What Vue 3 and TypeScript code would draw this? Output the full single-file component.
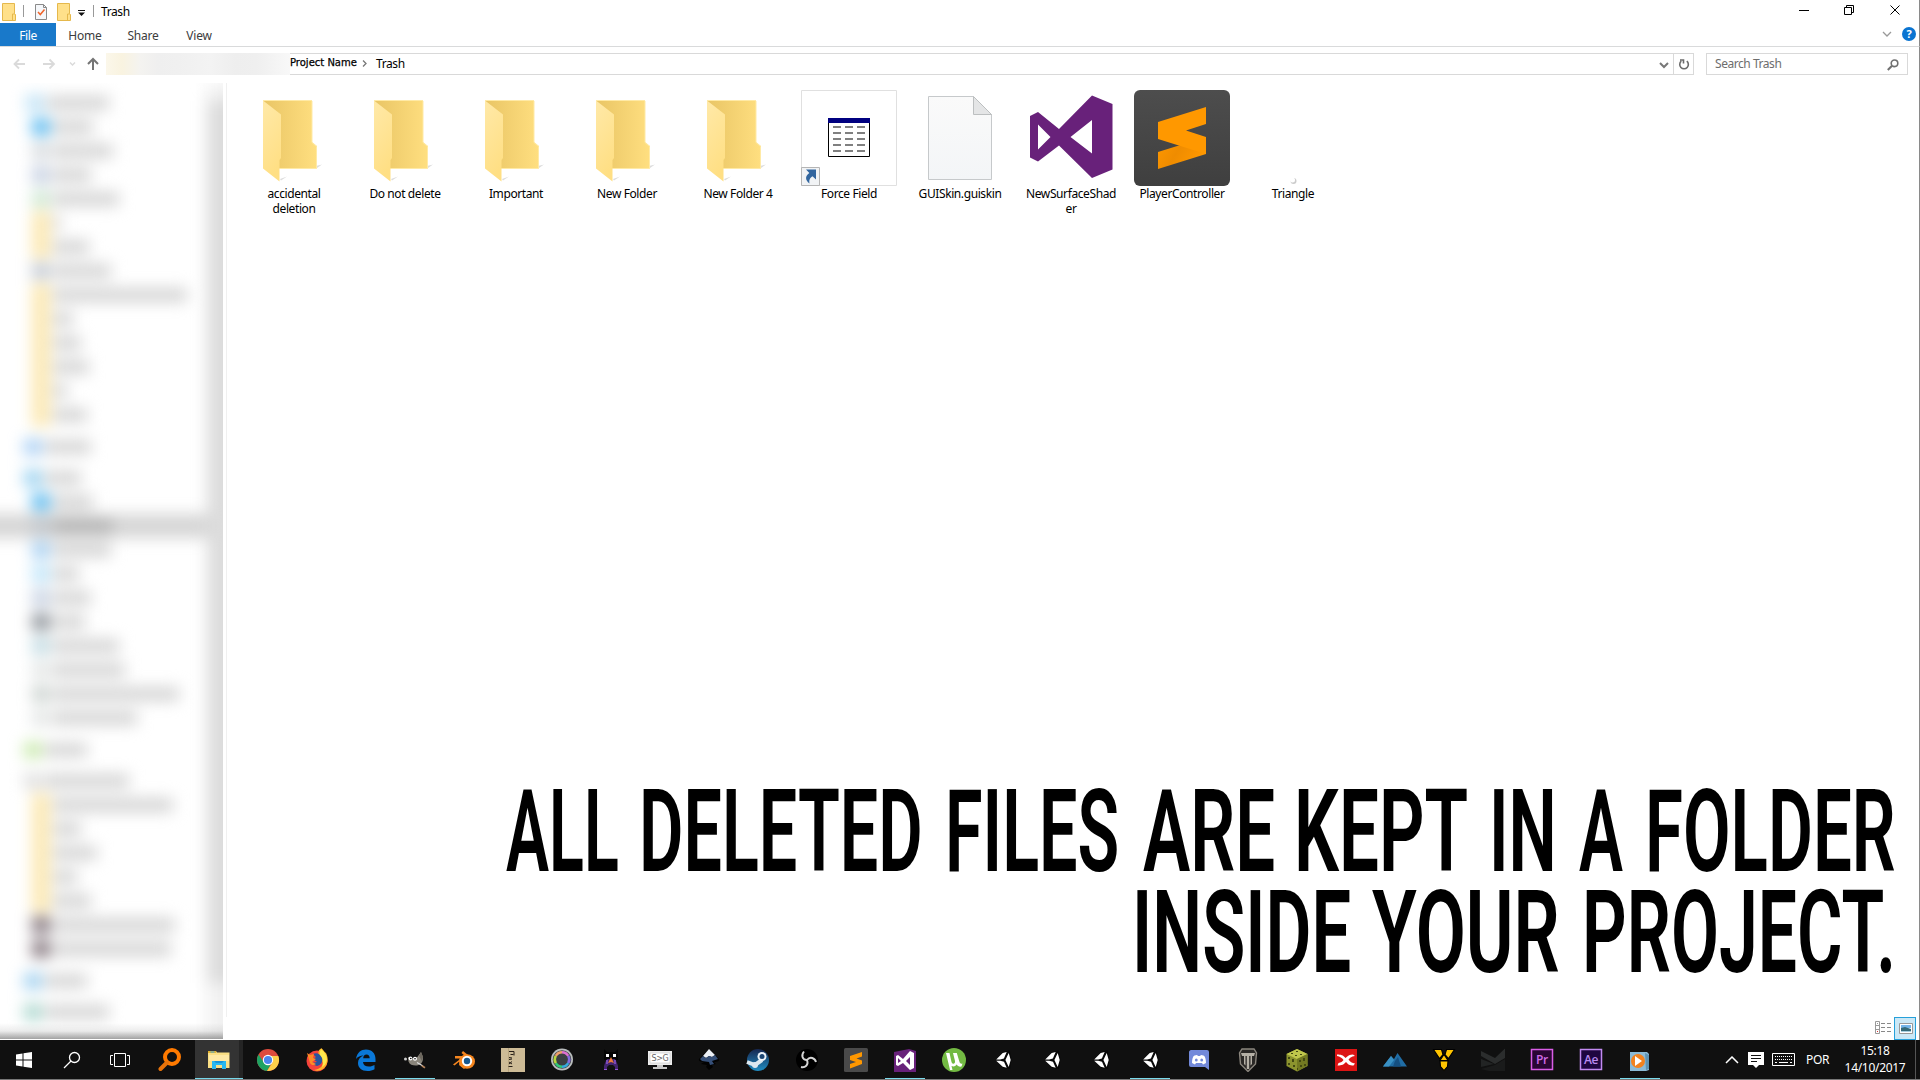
<script setup lang="ts">
import { onMounted, ref } from 'vue'

interface FileItem { name: string; kind: string }
interface NavRow { x: number; color: string; w: number; gap?: number; selected?: boolean }
interface TaskItem { art: string; state?: string }
interface Word { text: string; w: number; gap: number; scale: number }

const tabs: string[] = ['Home', 'Share', 'View']

const files: FileItem[] = [
  { name: 'accidental deletion', kind: 'folder' },
  { name: 'Do not delete', kind: 'folder' },
  { name: 'Important', kind: 'folder' },
  { name: 'New Folder', kind: 'folder' },
  { name: 'New Folder 4', kind: 'folder' },
  { name: 'Force Field', kind: 'shortcut' },
  { name: 'GUISkin.guiskin', kind: 'blank' },
  { name: 'NewSurfaceShader', kind: 'vs' },
  { name: 'PlayerController', kind: 'sublime' },
  { name: 'Triangle', kind: 'dot' },
]

const yellow = '#fce9b4'
const nav: NavRow[] = [
  { x: 26, color: '#bfe2f6', w: 62 },
  { x: 32, color: '#55b8f0', w: 40 },
  { x: 32, color: '#d6dade', w: 60 },
  { x: 32, color: '#c4cfe2', w: 38 },
  { x: 32, color: '#cde8d1', w: 66 },
  { x: 32, color: yellow, w: 8 },
  { x: 32, color: yellow, w: 36 },
  { x: 32, color: '#c2cad8', w: 58 },
  { x: 32, color: yellow, w: 134 },
  { x: 32, color: yellow, w: 20 },
  { x: 32, color: yellow, w: 28 },
  { x: 32, color: yellow, w: 36 },
  { x: 32, color: yellow, w: 14 },
  { x: 32, color: yellow, w: 34 },
  { x: 24, color: '#a9d0f6', w: 46, gap: 8 },
  { x: 24, color: '#97d1f1', w: 36, gap: 7 },
  { x: 32, color: '#55b8f0', w: 40 },
  { x: 32, color: '#bfc5cb', w: 60, selected: true },
  { x: 32, color: '#a4cff3', w: 58 },
  { x: 32, color: '#bce4fa', w: 26 },
  { x: 32, color: '#c5d0e2', w: 38 },
  { x: 32, color: '#868d94', w: 32 },
  { x: 32, color: '#bfdae2', w: 66 },
  { x: 32, color: '#e3e6e5', w: 72 },
  { x: 32, color: '#cbd2cf', w: 126 },
  { x: 32, color: '#e3e6e5', w: 84 },
  { x: 24, color: '#c9eaac', w: 42, gap: 8 },
  { x: 24, color: '#dfdfdf', w: 84, gap: 7 },
  { x: 32, color: yellow, w: 120 },
  { x: 32, color: yellow, w: 28 },
  { x: 32, color: yellow, w: 44 },
  { x: 32, color: yellow, w: 24 },
  { x: 32, color: yellow, w: 38 },
  { x: 32, color: '#7d6e76', w: 122 },
  { x: 32, color: '#7d6e76', w: 118 },
  { x: 24, color: '#9fd0f0', w: 42, gap: 8 },
  { x: 24, color: '#a8d6cd', w: 64, gap: 7 },
]

// Each word has its own width; the glyphs are condensed to fill it once the font is measured.
const word = (text: string, w: number, gap = 0): Word => ({ text, w, gap, scale: 0.62 })
const lines = ref<Word[][]>([
  [
    word('ALL', 113), word('DELETED', 284, 20), word('FILES', 174, 22), word('ARE', 132, 24),
    word('KEPT', 174, 19), word('IN', 68, 21), word('A', 44, 22), word('FOLDER', 251, 22),
  ],
  [word('INSIDE', 219), word('YOUR', 188, 21), word('PROJECT.', 314, 22)],
])
const headline = ref<HTMLElement | null>(null)

onMounted(() => {
  const glyphs = headline.value?.querySelectorAll<HTMLElement>('.glyphs')
  if (!glyphs) return
  lines.value.flat().forEach((w, i) => {
    w.scale = w.w / glyphs[i].offsetWidth
  })
})

const unity =
  '<g transform="translate(2.200 0)"><path d="M3 12L10 4l6.500-2 1.700 9.500L17 21l-7-1z" fill="#000" opacity=".5"/><path d="M3 11.500L9.500 5l4-1-2.800 6.500L7 11.500zM3 12.700h4l3.800 1 2.700 6-4-1zM12.200 11.900L15.500 5l2 7-2 7z" fill="#fff"/></g>'

const tasks: TaskItem[] = [
  { art: '<circle cx="14" cy="9" r="7" fill="none" stroke="#ff7a00" stroke-width="4"/><path d="M9 14.500L2.500 21" stroke="#e8730a" stroke-width="4" stroke-linecap="round"/>' },
  { state: 'active', art: '<path d="M1 3h8l1 1.500h12.500V20H1z" fill="#fadf84"/><path d="M1 3h8v2H1z" fill="#e6b32e"/><path d="M3.500 3.500h4v1h-4z" fill="#3ba9e8"/><path d="M2 7h20v6H2z" fill="#ffe9a4"/><path d="M5 21v-8h14v8h-4v-4H9v4z" fill="#28b8f0"/><path d="M7 13h10l-2 2H9z" fill="#1592d8"/>' },
  { art: '<circle cx="12" cy="12" r="11" fill="#dd4b3e"/><path d="M2.500 6.500A11 11 0 0 0 11 23l5-9-8 .5z" fill="#1da362"/><path d="M22.300 8H12.500l4 6.500L11 23A11 11 0 0 0 22.300 8z" fill="#fcd04b"/><circle cx="12" cy="12" r="5.200" fill="#fff"/><circle cx="12" cy="12" r="4.100" fill="#4a86ee"/>' },
  { art: '<circle cx="12" cy="13" r="10.500" fill="#f5433b"/><path d="M14 2c2-1 2-2 2-2 3 2 3 4 5 5 3 6 2 12-3 16-3 2-7 2-9 1 7-1 10-5 8-9-1-4-5-5-3-11z" fill="#ffb426"/><path d="M16 1c4 3 6 7 6 11-1 4-3 6-5 7 2-4 1-8-1-10-2-3-1-6 0-8z" fill="#ffe94d"/><path d="M8 6c4-2 7 0 9 4 1 4-1 7-5 8-3-1-5-2-5-3l5-1-4-3 3-2z" fill="#28559e"/><path d="M2 5l3 2 4-1-1 4 3 1-4 3 4 2c-2 2-5 1-6-1z" fill="#ff8c25"/>' },
  { art: '<path d="M2 11C3 4.500 7 1.500 12 1.500c6 0 9.500 4 9.500 9.500v3H9c.2 3 2.500 4.500 6 4.500 2.200 0 4-.6 5.500-1.500v4.200c-2 1.200-4.200 1.800-7 1.800C7.500 23 4 19.500 4 15c0-3.500 2-6.200 5.500-7.500C6.500 7.500 3.500 9 2 11zM9.200 10.300h6.500C15.700 8 14.500 6.500 12.500 6.500S9.300 8 9.200 10.300z" fill="#0a78d8"/>' },
  { state: 'open', art: '<path d="M5 9l4 1.500 5-1 4-5.500 2 5c.5 6-3 8.500-7.500 8.500-3 0-6-1-7-4z" fill="#8a857b"/><path d="M18 4l2 5-1 4-3-5z" fill="#6c675e"/><circle cx="7.500" cy="10.500" r="1.900" fill="#fff"/><circle cx="12" cy="10.800" r="2" fill="#fff"/><circle cx="7.800" cy="10.500" r=".8"/><circle cx="12" cy="10.800" r=".8"/><circle cx="2.500" cy="11" r="1.500" fill="#ccc"/><path d="M14 14.500l6 3.500" stroke="#ddd" stroke-width="1.300"/><path d="M19 17l3.500 2-1 1.500-3-2z" fill="#b5845c"/>' },
  { art: '<path d="M1 16.500l8-6H3V8h10l-3.500-3L11 3l10 8-9 10-5-4 1-4-5.500 4.500z" fill="#f5861f"/><ellipse cx="15" cy="13.500" rx="8" ry="7.300" fill="#f5861f"/><circle cx="15" cy="13" r="5.200" fill="#fff"/><circle cx="15" cy="13" r="3.200" fill="#15588f"/>' },
  { art: '<path d="M0 0h24v24H0z" fill="#cdbb96"/><path d="M7 0h1v24H7z" fill="#b7a47e"/><path d="M8 3.500h5v4M9.500 6.500h3M8 9.500l3 .5M8 11.500l3-.5M8 14l3 2M11 13.500L8 16M7.500 18.500h4" stroke="#282018" fill="none"/>' },
  { art: '<circle cx="12" cy="11.500" r="11" fill="#b9bdbe"/><circle cx="12" cy="11.500" r="9.300" fill="#3f4446"/><g fill="none" stroke-width="2.600"><path d="M12 4.300a7.200 7.200 0 0 1 6.200 3.600" stroke="#df70cf"/><path d="M18.200 7.900a7.200 7.200 0 0 1 0 7.200" stroke="#856ae0"/><path d="M18.200 15.100a7.200 7.200 0 0 1-6.200 3.600" stroke="#35a9dd"/><path d="M12 18.700a7.200 7.200 0 0 1-6.200-3.600" stroke="#30c978"/><path d="M5.800 15.100a7.200 7.200 0 0 1 0-7.200" stroke="#b7d83d"/><path d="M5.800 7.900A7.200 7.200 0 0 1 12 4.300" stroke="#ef9f69"/></g><circle cx="12" cy="11.500" r="5.600" fill="#3c4043"/>' },
  { art: '<path d="M5 1l3 3h8l3-3v11H5z" fill="#050505"/><path d="M7 6h3v3H7zM14 6h3v3h-3z" fill="#fff"/><path d="M8 11h8l2 4 1 3v4h-3v-3l-2-2h-4l-2 2v3H5v-4l1-3z" fill="#43246e"/><path d="M12 9l3 6-3-1-3 1z" fill="#eb7b38"/><path d="M8 12v4M16 12v4" stroke="#8a55d0" stroke-width="1.500"/><path d="M5 21.500h3M16 21.500h3" stroke="#9552dc"/>' },
  { art: '<path d="M0 3h24v14H0z" fill="#eee"/><path d="M2 5h20v10H2z" fill="#fff" stroke="#bbb" stroke-width=".5"/><path d="M9 17h6v2h4v2H5v-2h4z" fill="#c8c8c8"/><text x="12" y="13" text-anchor="middle" font-size="8" font-family="DejaVu Sans" fill="#666">S&gt;G</text>' },
  { art: '<path d="M12 1l10 10c1 2-2 3-5 3l2 2-4 1 1 2-4 3-3-3 1-2-6-1 3-2c-3 0-6-1-5-3z" fill="#020202"/><path d="M12 1l6 6-3 2-3-1-3 2-3-2z" fill="#ecf0f6"/><path d="M6 8l3 2 3-2 3 1 3-2 3 4-6 2 2 3-4 1-1-3-7-1-2-2z" fill="#354f78"/>' },
  { art: '<defs><linearGradient id="steam" x2="0" y2="1"><stop stop-color="#162650"/><stop offset="1" stop-color="#208dc2"/></linearGradient></defs><circle cx="12" cy="12" r="11" fill="url(#steam)"/><path d="M1 14l8 3 7-5" stroke="#dce8f0" stroke-width="4" fill="none"/><circle cx="16" cy="8.500" r="4.500" fill="#eef4fa"/><circle cx="16" cy="8.500" r="2.500" fill="#1d4673"/><circle cx="9" cy="17" r="3" fill="#dce8f0"/>' },
  { art: '<circle cx="12" cy="12" r="11" fill="#000"/><g fill="none" stroke="#d5d5d5" stroke-width="1.900"><path d="M12 12C7 12 6 7 9 3.500"/><path d="M12 12c3-4 8-2 9 2"/><path d="M12 12c2 5-2 8-6 7"/></g>' },
  { art: '<rect width="24" height="24" rx="1.500" fill="#4a4a4a"/><path d="M6 8l12-4v4.500L12.500 10.500 18 12.500V16L6 20.500V16l6-2-6-2z" fill="#ff9800"/>' },
  { state: 'open', art: '<path d="M1 4l15-3 7 2v21H1z" fill="#68217a"/><path d="M17 3l4 2v15l-4 2-7-7-5 3-2-1V8l2-1 5 4zm0 6l-4 4 4 4zM5 10v5l3-2z" fill="#fff" fill-rule="evenodd"/>' },
  { art: '<circle cx="12" cy="12" r="12" fill="#73ba43"/><path d="M4 5h3.500l2 9c1 3 4 2 3.500-1l-2-8h3.800l2.700 9c.5 1.500 1.500 2 3 1.500l-1 3c-2 .5-4-.5-5-2-1 2-3 2.500-5 1.500l1 4H8z" fill="#fff"/>' },
  { art: unity }, { art: unity }, { art: unity }, { art: unity, state: 'open' },
  { art: '<path d="M4 2h16a2 2 0 0 1 2 2v18l-4-3H4a2 2 0 0 1-2-2V4c0-1 1-2 2-2z" fill="#7289da"/><path d="M5 15c0-4 1-7 2.500-7.500L10 7l1 1h2l1-1 2.500.5C18 8 19 11 19 15l-3 1.500-1-1.500H9l-1 1.500z" fill="#fff"/><ellipse cx="9.300" cy="12" rx="1.400" ry="1.600" fill="#7289da"/><ellipse cx="14.700" cy="12" rx="1.400" ry="1.600" fill="#7289da"/>' },
  { art: '<path d="M6 1h12l2.500 4-1 11-7.500 7.500L4.500 16l-1-11z" fill="#2a2826" stroke="#8b867e" stroke-width="1.400"/><path d="M5 5h14l-1 3h-2v8l-1.500 1.500V8h-1.300v13h-2.400V8H9.500v9.500L8 16V8H6z" fill="#b5b0a6"/>' },
  { art: '<path d="M12 1l10.500 5v12L12 23.500 1.500 18V6z" fill="#8c942e"/><path d="M12 1l10.500 5L12 11 1.500 6z" fill="#bfc64b"/><path d="M12 11l10.500-5v12L12 23.500z" fill="#737a22"/><g fill="#444a12"><path d="M6 5h2v1H6zM11 3h2v1h-2zM15 6h2v1h-2zM10 7h2v1h-2zM3 9h2v2H3zM7 11h2v3H7zM3 15h2v2H3zM8 17h2v2H8zM14 12h2v2h-2zM18 10h2v3h-2zM15 17h2v2h-2zM19 16h2v2h-2zM12 20h1v2h-1z"/></g>' },
  { art: '<path d="M1 1h22v22H1z" fill="#dc1414"/><path d="M3 6.500c4 0 6 .5 8.500 3.500C14 7.500 16 6.500 19 6.500l2 1.500c-4 .5-5 2-6.500 3.500 1.500 2.500 3.500 3.500 6.500 4l-1.500 2c-4 0-5.500-1-7.500-3.500-2 2.500-4 3.500-8.500 3.500l1-2.500c2.500-.5 4-1.500 5-3C8 10 6 8.500 3 8z" fill="#fff"/>' },
  { art: '<path d="M0 18.500L8 8l3 3 3.500-6L24 18.500z" fill="#206da5"/><path d="M0 18.500L8 8l3 4-5 6.500z" fill="#3a91c4"/><path d="M12 13l3-4 3 9.500h-8z" fill="#154f80"/>' },
  { art: '<g fill="#ffc400" stroke="#000" stroke-width="1.100"><path d="M1.500 1.500h8l1.500 5-3.500 4z"/><path d="M22.500 1.500h-8l-1.500 5 3.500 4z"/><path d="M8 13h8l-.5 5.500-3.500 4-3.500-4z"/><path d="M12 6.500l4 6H8z"/></g>' },
  { art: '<path d="M0 3l14 7L24 .5V10L14 16 0 8z" fill="#2b2d2d"/><path d="M0 11l13 5L0 19z" fill="#222424"/><path d="M0 21l14-4 10-6v12H8z" fill="#1a1b1b"/>' },
  { art: '<rect x="1.500" y="1.500" width="21" height="20" fill="#2a0634" stroke="#d95de6" stroke-width="1.500"/><text x="12" y="16" text-anchor="middle" font-size="12" font-family="Open Sans" font-weight="600" fill="#d06be8">Pr</text>' },
  { art: '<rect x="1.500" y="1.500" width="21" height="20" fill="#1e0640" stroke="#c18af0" stroke-width="1.500"/><text x="12" y="16" text-anchor="middle" font-size="12" font-family="Open Sans" font-weight="600" fill="#b98af0">Ae</text>' },
  { state: 'open', art: '<path d="M2 4h17l2 2v16l-3 1H2z" fill="#8bbad6"/><path d="M17 5l4 2v14l-3 1z" fill="#5e93b3"/><circle cx="10" cy="13" r="7" fill="#f2821e"/><path d="M7 8l7 5-7 5z" fill="#fff"/>' },
]
</script>

<template>
  <div class="desktop">
    <header class="titlebar">
      <svg class="mini" viewBox="0 0 14 18"><path d="M.5.500h12v10l1 1v6H.5z" fill="#ffe08a" stroke="#e5b84c" /><path d="M10.500 17v-6h2.500" fill="none" stroke="#e5b84c" /></svg>
      <i class="sep s1"></i>
      <svg class="doc" viewBox="0 0 12 16"><path d="M.5.500h8l3 3v12H.5z" fill="#f5f7fa" stroke="#8a8a8a" /><path d="M8.500.500v3h3" fill="none" stroke="#8a8a8a" /><path d="M3 8l2.300 2.500L9.500 5.500" fill="none" stroke="#f0642a" stroke-width="1.500" /></svg>
      <svg class="mini m2" viewBox="0 0 14 18"><path d="M.5.500h12v10l1 1v6H.5z" fill="#ffe08a" stroke="#e5b84c" /><path d="M10.500 17v-6h2.500" fill="none" stroke="#e5b84c" /></svg>
      <svg class="qat" viewBox="0 0 7 6"><path d="M0 0h7v1H0zM0 2.500h7L3.500 6z" fill="#111" /></svg>
      <i class="sep s2"></i>
      <span class="caption">Trash</span>
      <svg class="winctl" viewBox="0 0 102 12" fill="none" stroke="#000">
        <path d="M0 6.500h10M45.500 3.500h7v7h-7zM47.500 3.500v-2h7v7h-2M91.500 1.500l9 9M100.500 1.500l-9 9" />
      </svg>
    </header>

    <nav class="ribbon">
      <span class="file-tab">File</span>
      <span v-for="t in tabs" :key="t" class="tab">{{ t }}</span>
      <svg class="collapse" viewBox="0 0 10 6"><path d="M1 1l4 4 4-4" fill="none" stroke="#999" stroke-width="1.300" /></svg>
      <span class="help">?</span>
    </nav>

    <div class="address-row">
      <svg class="arrows" viewBox="0 0 90 14" fill="none">
        <g stroke="#dadada" stroke-width="1.800"><path d="M12 7H1.500M6 2.500L1.500 7 6 11.500M30 7h11M36.500 2.500L41 7l-4.500 4.500" /><path d="M57 5.500l2.500 2.500L62 5.500" stroke-width="1.400" /></g>
        <path d="M80 13V2M75 7l5-5 5 5" stroke="#757575" stroke-width="2" />
      </svg>
      <div class="path-haze"></div>
      <div class="address">
        <span class="project">Project Name</span>
        <svg class="crumb" viewBox="0 0 5 7"><path d="M1 .5l3 3-3 3" fill="none" stroke="#777" stroke-width="1.300" /></svg>
        <span class="here">Trash</span>
        <svg class="drop" viewBox="0 0 10 7"><path d="M1 1l4 4 4-4" fill="none" stroke="#777" stroke-width="2" /></svg>
        <span class="refresh"><svg viewBox="0 0 12 13"><path d="M8.800 3.200A4.300 4.300 0 1 1 3.300 3.200M2 2h3.500v3.500" fill="none" stroke="#6b6b6b" stroke-width="1.600" /></svg></span>
      </div>
      <div class="search">
        <span>Search Trash</span>
        <svg viewBox="0 0 12 12"><circle cx="7.500" cy="4.300" r="3.300" fill="none" stroke="#707070" stroke-width="1.600" /><path d="M5 6.800L.8 11" stroke="#707070" stroke-width="2" /></svg>
      </div>
    </div>

    <main class="body">
      <aside class="sidebar">
        <div class="haze">
          <div class="rows">
            <div v-for="(r, i) in nav" :key="i" class="row" :class="{ selected: r.selected }" :style="{ marginTop: (r.gap || 0) + 'px', paddingLeft: r.x + 'px' }">
              <i class="glyph" :class="{ tall: r.color === yellow }" :style="{ background: r.color }"></i>
              <i class="bar" :style="{ width: r.w + 'px' }"></i>
            </div>
          </div>
          <div class="scroll"><i></i></div>
        </div>
        <div class="foot"></div>
      </aside>

      <section class="pane">
        <div class="files">
          <figure v-for="f in files" :key="f.name" class="item">
            <div class="thumb" :class="f.kind">
              <svg v-if="f.kind === 'folder'" viewBox="0 0 96 96">
                <defs>
                  <linearGradient id="back" x2="1" y2="0"><stop stop-color="#e9c565" /><stop offset="1" stop-color="#ffdf80" /></linearGradient>
                  <linearGradient id="flap" x2=".3" y2="1"><stop stop-color="#ffe9a8" /><stop offset="1" stop-color="#ffdf84" /></linearGradient>
                </defs>
                <path d="M70 76l6-1.500-5 3.500zM34 89l7-2.500-6 4z" fill="#ddd" />
                <path d="M17 10h49v42l5 4v22.500H33z" fill="url(#back)" />
                <path d="M17 10.500h49M66 11v41.500l4.500 4v22H34" fill="none" stroke="#ffeaa6" />
                <path d="M17 10.500l18 14V68l-1.500 2v21.500L17 78.500z" fill="url(#flap)" />
              </svg>
              <svg v-else-if="f.kind === 'shortcut'" viewBox="0 0 96 96">
                <path d="M.5.500h95v95H.5z" fill="#fff" stroke="#e0e0e0" />
                <path d="M27.500 29.500h41v37h-41z" fill="#fff" stroke="#000" />
                <path d="M27 28h42v5H27z" fill="#000080" />
                <path d="M32 37h32M32 43h32M32 49h32M32 55h32M32 61h32" stroke="#808080" stroke-width="2" stroke-dasharray="8 4" />
                <path d="M.5 77.500h18v18H.5z" fill="#f1f3f5" stroke="#b5b5b5" />
                <path d="M5 79.500h10v10l-3.500-3.300c-3 2-3.500 4-3 7.300C4 90 4 86 8.300 83z" fill="#32669f" />
              </svg>
              <svg v-else-if="f.kind === 'blank'" viewBox="0 0 96 96">
                <defs><linearGradient id="paper" x2="0" y2="1"><stop stop-color="#fafafa" /><stop offset="1" stop-color="#f3f5f7" /></linearGradient></defs>
                <path d="M16.500 6.500H61L79.500 24.500v65h-63z" fill="url(#paper)" stroke="#c6c9cb" />
                <path d="M61.500 6.500v18h18z" fill="#e4e5e6" stroke="#bcbfc0" />
              </svg>
              <svg v-else-if="f.kind === 'vs'" viewBox="0 0 96 96">
                <path d="M7 26l8-4 21 17L69 5.500 89.500 14v65.500L69 88 36 55.500 15 71.500l-8-4zM15 34.500v25L27.500 47zM69 30L47.500 47 69 63.500z" fill="#68217a" fill-rule="evenodd" />
              </svg>
              <svg v-else-if="f.kind === 'sublime'" viewBox="0 0 96 96">
                <defs>
                  <linearGradient id="slab" x2="0" y2="1"><stop stop-color="#4d4d4d" /><stop offset="1" stop-color="#3f3f3f" /></linearGradient>
                  <linearGradient id="fold" x2="1" y2=".4"><stop stop-color="#ff9800" /><stop offset=".5" stop-color="#ef8c00" /><stop offset="1" stop-color="#ff9800" /></linearGradient>
                </defs>
                <rect width="96" height="96" rx="6" fill="url(#slab)" />
                <path d="M24 62l48-15v17L24 79z" fill="url(#fold)" />
                <path d="M24 32l48-15v17l-20 6.500L72 47v17L24 49z" fill="#ff9800" />
              </svg>
              <svg v-else viewBox="0 0 96 96"><circle cx="48.500" cy="91" r="3" fill="#ccc" /><circle cx="47.500" cy="90" r="2.500" fill="#fff" /></svg>
            </div>
            <figcaption>{{ f.name }}</figcaption>
          </figure>
        </div>
        <div class="views">
          <svg class="details" viewBox="0 0 17 14"><path d="M.5.500h4v12h-4zM.5 4.500h4M.5 8.500h4" fill="none" stroke="#999" /><path d="M6 2.500h4M12 2.500h4M6 6.500h4M12 6.500h4M6 10.500h4M12 10.500h4" stroke="#888" /><path d="M2 2h1v1H2z" fill="#999" /><path d="M2 10h1v1H2z" fill="#d33" /></svg>
          <span class="large"><svg viewBox="0 0 14 11"><path d="M.5.500h13v10H.5z" fill="#fff" stroke="#999" /><path d="M2 2h10v3H2z" fill="#75b5ea" /><path d="M2 5l4-1 6 2v3H2z" fill="#356a78" /><path d="M2 8h10v1H2z" fill="#a6cfe0" /></svg></span>
        </div>
      </section>
      <div class="edge"></div>
    </main>

    <div ref="headline" class="headline">
      <div v-for="(line, l) in lines" :key="l" class="line">
        <span v-for="w in line" :key="w.text" class="word" :style="{ width: w.w + 'px', marginLeft: w.gap + 'px' }">
          <span class="glyphs" :style="{ transform: `scaleX(${w.scale})` }">{{ w.text }}</span>
        </span>
      </div>
    </div>

    <footer class="taskbar">
      <span class="sys"><svg viewBox="0 0 24 24"><path d="M4 6.500l6.500-1v6H4zM11.500 5.300L20 4v7.500h-8.500zM4 12.500h6.500v6L4 17.600zM11.500 12.500H20V20l-8.500-1.200z" fill="#fff" /></svg></span>
      <span class="sys"><svg viewBox="0 0 24 24" fill="none" stroke="#fff" stroke-width="1.300"><circle cx="14.500" cy="9.500" r="5" /><path d="M11 13l-7 7" /></svg></span>
      <span class="sys"><svg viewBox="0 0 24 24" fill="none" stroke="#fff"><path d="M6.500 5.500h11v13h-11zM5 7.500H2.500v9H5M19 7.500h2.500v9H19" /></svg></span>
      <span v-for="(t, i) in tasks" :key="i" class="task" :class="t.state"><svg viewBox="0 0 24 24" v-html="t.art"></svg></span>
      <div class="tray">
        <svg class="up" viewBox="0 0 14 8"><path d="M1 7l6-6 6 6" fill="none" stroke="#fff" stroke-width="1.500" /></svg>
        <svg class="note" viewBox="0 0 16 16"><path d="M0 0h16v13h-5l-3 3-3-3H0z" fill="#fff" /><path d="M3 3.500h10M3 6.500h10M3 9.500h6" stroke="#111" /></svg>
        <svg class="keys" viewBox="0 0 23 13"><path d="M.5.500h22v12H.5z" fill="none" stroke="#fff" /><path d="M3 3.500h17M3 6.500h17" stroke="#fff" stroke-dasharray="1 1" /><path d="M3 9.500h2M7 9.500h9M18 9.500h2" stroke="#fff" /></svg>
        <span class="lang">POR</span>
        <div class="clock"><span>15:18</span><span>14/10/2017</span></div>
        <i class="peek"></i>
      </div>
    </footer>
  </div>
</template>

<style>
html, body { margin: 0; background: #fff; overflow: hidden; }
</style>

<style scoped>
.desktop { position: relative; display: flex; flex-direction: column; width: 1920px; height: 1080px; background: #fff; overflow: hidden; font-family: "Noto Sans", "Open Sans", sans-serif; font-size: 12px; color: #000; letter-spacing: -0.4px; }
svg { display: block; flex: none; }
i { display: block; flex: none; }

.titlebar { display: flex; height: 23px; box-sizing: border-box; padding-left: 2px; border-right: 1px solid #8a8a8a; }
.mini { width: 14px; height: 18px; margin-top: 3px; }
.sep { width: 1px; height: 12px; margin-top: 5px; background: #999; }
.s1 { margin-left: 7px; }
.doc { width: 12px; height: 16px; margin: 4px 0 0 11px; }
.m2 { margin-left: 10px; }
.qat { width: 7px; height: 6px; margin: 10px 0 0 7px; }
.s2 { margin-left: 8px; }
.caption { margin-left: 7px; line-height: 24px; }
.winctl { width: 102px; height: 12px; margin: 4px 18px 0 auto; }

.ribbon { display: flex; height: 24px; box-sizing: border-box; border-bottom: 1px solid #d9dadb; border-right: 1px solid #8a8a8a; line-height: 25px; color: #3c3c3c; }
.file-tab { width: 56px; text-align: center; background: #1979ca; color: #fff; }
.tab { width: 58px; text-align: center; letter-spacing: -0.2px; }
.tab:nth-child(4) { width: 54px; }
.collapse { width: 10px; height: 6px; margin: 8px 0 0 auto; }
.help { width: 14px; height: 14px; margin: 4px 3px 0 10px; border-radius: 50%; background: #0a74d1; color: #fff; font-weight: 700; font-size: 11px; line-height: 14px; text-align: center; letter-spacing: 0; }

.address-row { display: flex; height: 36px; box-sizing: border-box; padding-top: 6px; border-right: 1px solid #8a8a8a; }
.arrows { width: 90px; height: 14px; margin: 4px 3px 0 13px; }
.path-haze { width: 184px; height: 22px; background: linear-gradient(90deg, #fbf7ea 0, #f9f3e0 16px, #f4f3f0 34px, #efefef 52px, #f0f0f0 72px, #f3f3f3 104px, #eeeeee 130px, #efefef 150px, #f8f8f8 184px); }
.address { display: flex; width: 1404px; height: 22px; box-sizing: border-box; border: 1px solid #d9d9d9; border-left: 0; line-height: 19px; }
.project { font-family: "DejaVu Sans", sans-serif; font-size: 10px; line-height: 18px; width: 72px; letter-spacing: 0; white-space: nowrap; -webkit-text-stroke: 0.250px #000; }
.crumb { width: 5px; height: 7px; margin-top: 6px; }
.here { margin-left: 9px; }
.drop { width: 10px; height: 7px; margin: 8px 4px 0 auto; }
.refresh { width: 19px; border-left: 1px solid #d9d9d9; }
.refresh svg { width: 12px; height: 13px; margin: 4px 0 0 4px; }
.search { display: flex; justify-content: space-between; width: 202px; height: 22px; box-sizing: border-box; margin-left: 12px; padding: 0 8px 0 8px; border: 1px solid #d9d9d9; line-height: 20px; color: #6d6d6d; letter-spacing: -0.450px; }
.search svg { width: 12px; height: 12px; margin-top: 5px; }

.body { display: flex; height: 957px; }
.sidebar { position: relative; width: 223px; height: 956px; overflow: hidden; }
.haze { display: flex; width: 223px; height: 956px; filter: blur(7.500px); }
.rows { width: 207px; padding-top: 8px; }
.row { display: flex; align-items: center; height: 24px; box-sizing: border-box; width: 230px; margin-left: -22px; border-left: 22px solid transparent; }
.row.selected { background: #d6d6d6; }
.row.selected .bar { background: #b3b3b3; }
.glyph { width: 18px; height: 16px; }
.glyph.tall { height: 24px; }
.bar { height: 14px; margin-left: 3px; background: #d4d4d4; }
.scroll { position: relative; width: 40px; flex: none; height: 956px; background: #f1f1f1; }
.scroll i { width: 40px; height: 882px; margin-top: 18px; background: #dcdcdc; }
.foot { position: absolute; left: 0; bottom: 0; width: 223px; height: 16px; background: linear-gradient(180deg, transparent, rgba(70, 70, 70, .1) 50%, rgba(70, 70, 70, .5)); }

.pane { display: flex; flex-direction: column; justify-content: space-between; width: 1696px; box-sizing: border-box; background: linear-gradient(#f0f0f0, #f0f0f0) 3px 0 / 1px 934px no-repeat; }
.edge { width: 1px; background: #8a8a8a; }
.files { display: flex; gap: 7px; padding: 7px 0 0 19px; }
.item { width: 104px; margin: 0; display: flex; flex-direction: column; align-items: center; }
.thumb, .thumb svg { width: 96px; height: 96px; }
figcaption { width: 92px; text-align: center; line-height: 15px; word-break: break-word; }
.views { display: flex; align-self: flex-end; margin-right: 3px; }
.details { width: 17px; height: 14px; margin: 4px 2px 0 0; }
.large { width: 22px; height: 23px; box-sizing: border-box; border: 1px solid #26a0da; background: #cbe8f6; }
.large svg { width: 14px; height: 11px; margin: 5px 0 0 4px; }

.headline { position: absolute; right: 24px; top: 781px; font-family: Roboto, sans-serif; font-size: 115.300px; font-weight: 600; letter-spacing: 0; }
.line { display: flex; justify-content: flex-end; height: 101px; line-height: 101px; }
.word { display: block; flex: none; }
.glyphs { display: inline-block; transform-origin: 0 50%; white-space: nowrap; }

.taskbar { display: flex; height: 40px; box-sizing: border-box; background: #101010; border-bottom: 1px solid #777; color: #fff; }
.sys { width: 48px; padding-top: 8px; box-sizing: border-box; }
.sys svg { width: 24px; height: 24px; margin: 0 auto; }
.task { width: 48px; height: 39px; margin-right: 1px; box-sizing: border-box; padding-top: 8px; }
.task svg { width: 24px; height: 24px; margin: 0 auto; }
.task.active { background: linear-gradient(90deg, #333 44px, #242424 44px); box-shadow: inset 0 -1px #76d8ea; }
.task.open { background: linear-gradient(#7adbec, #7adbec) 4px 38px / 40px 1px no-repeat; }
.sys + .task { margin-left: 2px; }
.tray { display: flex; margin-left: auto; width: 195px; font-size: 12px; letter-spacing: -0.3px; }
.up { width: 14px; height: 8px; margin: 16px 0 0 0; }
.note { width: 16px; height: 16px; margin: 12px 0 0 9px; }
.keys { width: 23px; height: 13px; margin: 13px 0 0 8px; }
.lang { margin: 0 0 0 11px; line-height: 39px; width: 34px; }
.clock { display: flex; flex-direction: column; width: 70px; text-align: center; line-height: 17px; padding-top: 2px; }
.peek { width: 1px; height: 39px; margin-left: 5px; background: #555; }
</style>
